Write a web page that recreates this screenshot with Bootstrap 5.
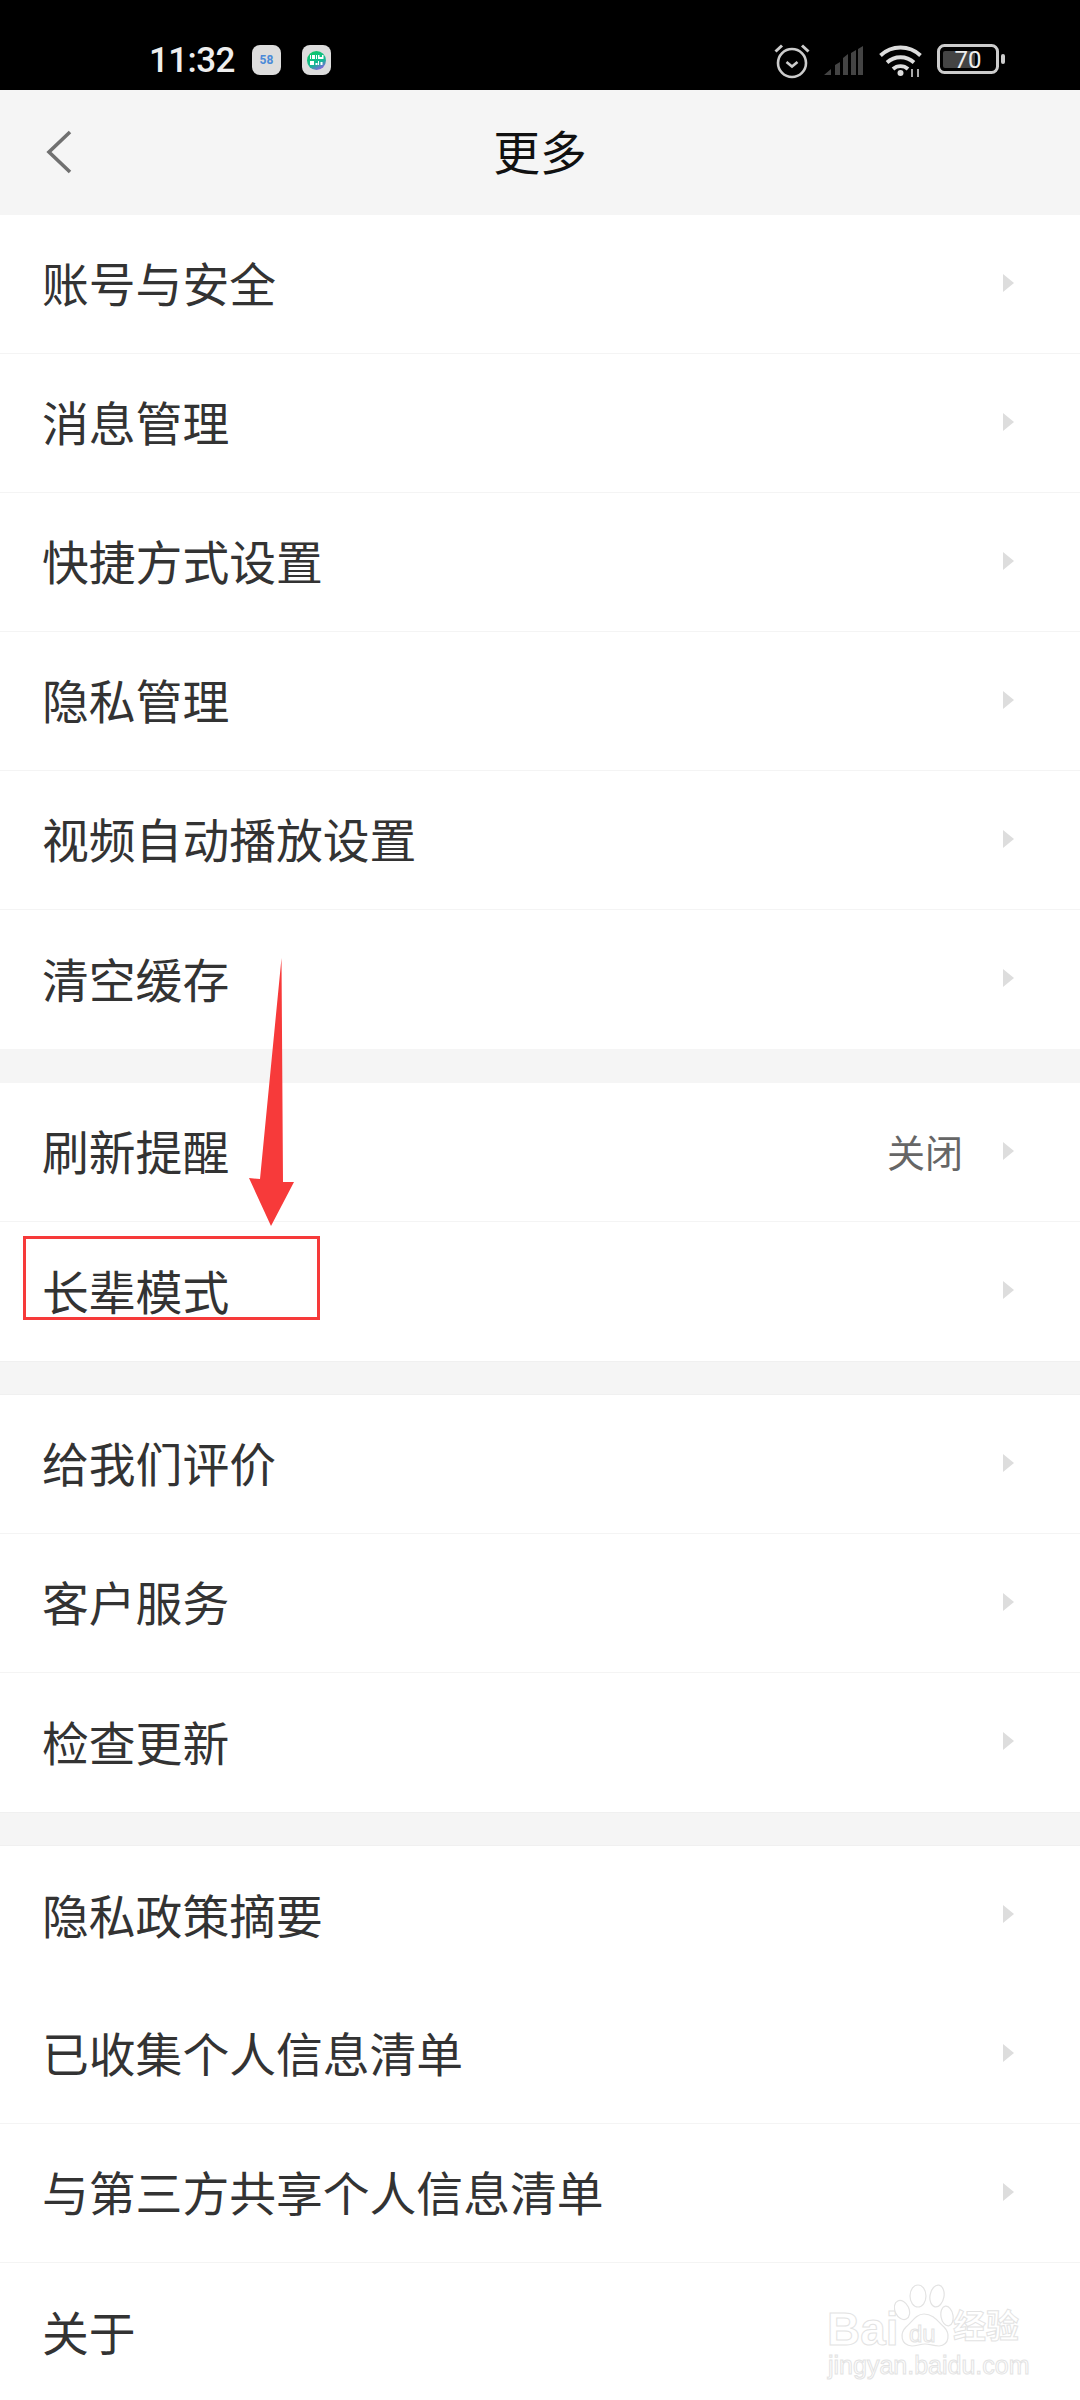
<!DOCTYPE html>
<html lang="zh-CN">
<head>
<meta charset="utf-8">
<title>更多</title>
<link rel="stylesheet" href="https://cdn.jsdelivr.net/npm/bootstrap@5.3.0/dist/css/bootstrap.min.css">
<style>
html,body{height:2400px;overflow:hidden;background:#fff}
body{font-family:"Noto Sans CJK SC","Liberation Sans",sans-serif;position:relative}
.sbar{height:90px;background:#000;padding:43px 73px 0 149px}
.sbar-time{font-family:Roboto,sans-serif;font-weight:500;font-size:35px;line-height:34px;color:#eee;width:84px;margin-right:19px;letter-spacing:-.6px;margin-top:1px}
.tile{width:29px;height:30px;border-radius:8px;background:#ddd;margin-right:21px;margin-top:2px}
.tile-58{font-family:Roboto,sans-serif;font-size:12px;font-weight:700;color:#4a8ad8;line-height:1}
.gdot{display:block;width:19px;height:19px}
.head{height:125px;background:#f5f5f5;color:#111;font-size:46.800px;line-height:1;padding-bottom:4px;position:relative}
.back{position:absolute;left:46px;top:40px}
.plain{background:#fff}
.gapper{height:34px;background:#f5f5f5}
.gapper-b{height:34px;background:#f5f5f5;border-top:1px solid #f0f0f0;border-bottom:1px solid #f0f0f0}
.rowitem{height:139px;padding:0 66px 0 42px;border-color:#f4f4f4;color:#333;font-size:46.800px;line-height:1;background:#fff}
.rowitem .lbl{padding-bottom:3px}
.rowval{font-size:38px;color:#666;margin-right:40px;padding-bottom:2px}
.tri{width:0;height:0;border-left:11px solid #ddd;border-top:9px solid transparent;border-bottom:9px solid transparent;margin-bottom:3px}
.redbox{position:absolute;left:23px;top:1236px;width:297px;height:84px;border:3px solid #f63a3a}
.arrow{position:absolute;left:240px;top:950px}
.wm{position:absolute;left:824px;top:2280px;width:210px;height:100px}
.wmtxt{position:absolute;color:#fff;-webkit-text-stroke:1px #e3e3e3;line-height:.8;white-space:nowrap}
.wm-bai{left:3px;top:31px;font-family:"Liberation Sans",sans-serif;font-weight:700;font-size:46px}
.wm-du{left:85px;top:44px;font-family:"Liberation Sans",sans-serif;font-size:24px}
.wm-jy{left:129px;top:31px;font-family:"Noto Sans CJK SC",sans-serif;font-weight:700;font-size:33px}
.wm-url{left:4px;top:73px;font-family:"Liberation Sans",sans-serif;font-size:25px;line-height:1}
</style>
</head>
<body>
<div class="sbar d-flex align-items-start">
  <div class="sbar-time">11:32</div>
  <div class="tile tile-58 d-flex align-items-center justify-content-center">58</div>
  <div class="tile d-flex align-items-center justify-content-center">
    <svg class="gdot" viewBox="0 0 19 19">
      <defs><linearGradient id="gd" x1="0.3" y1="0" x2="0.8" y2="1"><stop offset="0" stop-color="#10c868"/><stop offset=".6" stop-color="#12b894"/><stop offset="1" stop-color="#a050f0"/></linearGradient></defs>
      <circle cx="9.500" cy="9.500" r="9.500" fill="url(#gd)"/>
      <path d="M3 4h1v4H3zM5 4h3v4H5zM9 4h1v4H9zM11 4h1.500v2H15V4h1.500v4H11zM3 10h4v4H3zM8.500 12h2v2h-2zM11 10h1v4h-1zM13.500 11h2v3h-2z" fill="#fff"/>
    </svg>
  </div>
  <div class="ms-auto d-flex align-items-start">
    <svg width="36" height="36" viewBox="0 0 36 36" fill="none" stroke="#ccc" stroke-width="2.6" style="margin-right:13px">
      <circle cx="18" cy="20" r="14"/><path d="M12.500 19l5.500 4.500 5.500-4.500"/><path d="M1.500 8.500 8 2.500M34.500 8.500 28 2.500" stroke-width="3"/>
    </svg>
    <svg width="42" height="32" viewBox="0 0 42 32" fill="#444" style="margin-right:14px;margin-top:2px">
      <path d="M1 30l7-6v6zM12 30v-10l5-3v13zM20 30V13l5-4v21zM28 30V8l5-3v25zM35 30V4l5-3v29z"/>
    </svg>
    <svg width="44" height="34" viewBox="0 0 44 34" fill="none" stroke="#ddd" stroke-width="3.800" style="margin-right:14px;margin-top:1px">
      <path d="M1.500 11.500a29 29 0 0 1 40 0M8 18.500a20 20 0 0 1 27 0M14 25a11 11 0 0 1 15 0"/>
      <circle cx="21.500" cy="29" r="3" fill="#ddd" stroke="none"/>
      <path d="M33 33V25M39 33V25" stroke-width="1.800" stroke="#bbb"/>
    </svg>
    <svg width="70" height="32" viewBox="0 0 70 32" style="margin-top:1px">
      <rect x="1.500" y="1.500" width="59" height="27" rx="6" fill="none" stroke="#ccc" stroke-width="3"/>
      <rect x="6" y="7" width="32" height="17" rx="2" fill="#444"/>
      <rect x="64" y="10" width="4" height="10" rx="2" fill="#ccc"/>
      <text x="31" y="24" text-anchor="middle" font-family="Roboto,sans-serif" font-size="24" fill="#eee">70</text>
    </svg>
  </div>
</div>
<div class="head d-flex align-items-center justify-content-center">
  <svg class="back" width="26" height="44" viewBox="0 0 26 44" fill="none" stroke="#707070" stroke-width="3.600"><path d="M24 2 3 22l21 20"/></svg>
  <span>更多</span>
</div>
<div class="list-group list-group-flush plain">
  <div class="list-group-item rowitem d-flex align-items-center justify-content-between"><span class="lbl">账号与安全</span><span class="tri"></span></div>
  <div class="list-group-item rowitem d-flex align-items-center justify-content-between"><span class="lbl">消息管理</span><span class="tri"></span></div>
  <div class="list-group-item rowitem d-flex align-items-center justify-content-between"><span class="lbl">快捷方式设置</span><span class="tri"></span></div>
  <div class="list-group-item rowitem d-flex align-items-center justify-content-between"><span class="lbl">隐私管理</span><span class="tri"></span></div>
  <div class="list-group-item rowitem d-flex align-items-center justify-content-between"><span class="lbl">视频自动播放设置</span><span class="tri"></span></div>
  <div class="list-group-item rowitem d-flex align-items-center justify-content-between"><span class="lbl">清空缓存</span><span class="tri"></span></div>
</div>
<div class="gapper"></div>
<div class="list-group list-group-flush plain">
  <div class="list-group-item rowitem d-flex align-items-center justify-content-between"><span class="lbl">刷新提醒</span><span class="d-flex align-items-center"><span class="rowval">关闭</span><span class="tri"></span></span></div>
  <div class="list-group-item rowitem d-flex align-items-center justify-content-between"><span class="lbl">长辈模式</span><span class="tri"></span></div>
</div>
<div class="gapper-b"></div>
<div class="list-group list-group-flush plain">
  <div class="list-group-item rowitem d-flex align-items-center justify-content-between"><span class="lbl">给我们评价</span><span class="tri"></span></div>
  <div class="list-group-item rowitem d-flex align-items-center justify-content-between"><span class="lbl">客户服务</span><span class="tri"></span></div>
  <div class="list-group-item rowitem d-flex align-items-center justify-content-between"><span class="lbl">检查更新</span><span class="tri"></span></div>
</div>
<div class="gapper-b"></div>
<div class="list-group list-group-flush plain">
  <div class="list-group-item rowitem border-0 d-flex align-items-center justify-content-between"><span class="lbl">隐私政策摘要</span><span class="tri"></span></div>
  <div class="list-group-item rowitem d-flex align-items-center justify-content-between"><span class="lbl">已收集个人信息清单</span><span class="tri"></span></div>
  <div class="list-group-item rowitem d-flex align-items-center justify-content-between"><span class="lbl">与第三方共享个人信息清单</span><span class="tri"></span></div>
  <div class="list-group-item rowitem d-flex align-items-center justify-content-between"><span class="lbl">关于</span></div>
</div>
<div class="redbox"></div>
<svg class="arrow" width="60" height="280" viewBox="0 0 60 280"><path d="M41.500 8 20 229l-11-1 22 48 23-44-11 0z" fill="#f73a3a"/></svg>
<div class="wm">
  <span class="wmtxt wm-bai">Bai</span>
  <svg style="position:absolute;left:70px;top:4px" width="60" height="66" viewBox="0 0 60 66" fill="#fff" stroke="#e3e3e3" stroke-width="1.200">
    <ellipse cx="8" cy="26" rx="7" ry="10" transform="rotate(-25 8 26)"/><ellipse cx="24" cy="12" rx="8" ry="11"/><ellipse cx="43" cy="12" rx="7" ry="11" transform="rotate(10 43 12)"/><ellipse cx="53" cy="32" rx="6" ry="10" transform="rotate(-10 53 32)"/>
    <path d="M30 30c-8 0-12 8-18 13-6 6-6 18 6 19 5 0 8-2 13-2s8 2 14 2c11-1 11-13 5-19-6-5-10-13-20-13z"/>
  </svg>
  <span class="wmtxt wm-du">du</span>
  <span class="wmtxt wm-jy">经验</span>
  <span class="wmtxt wm-url">jingyan.baidu.com</span>
</div>
</body>
</html>
